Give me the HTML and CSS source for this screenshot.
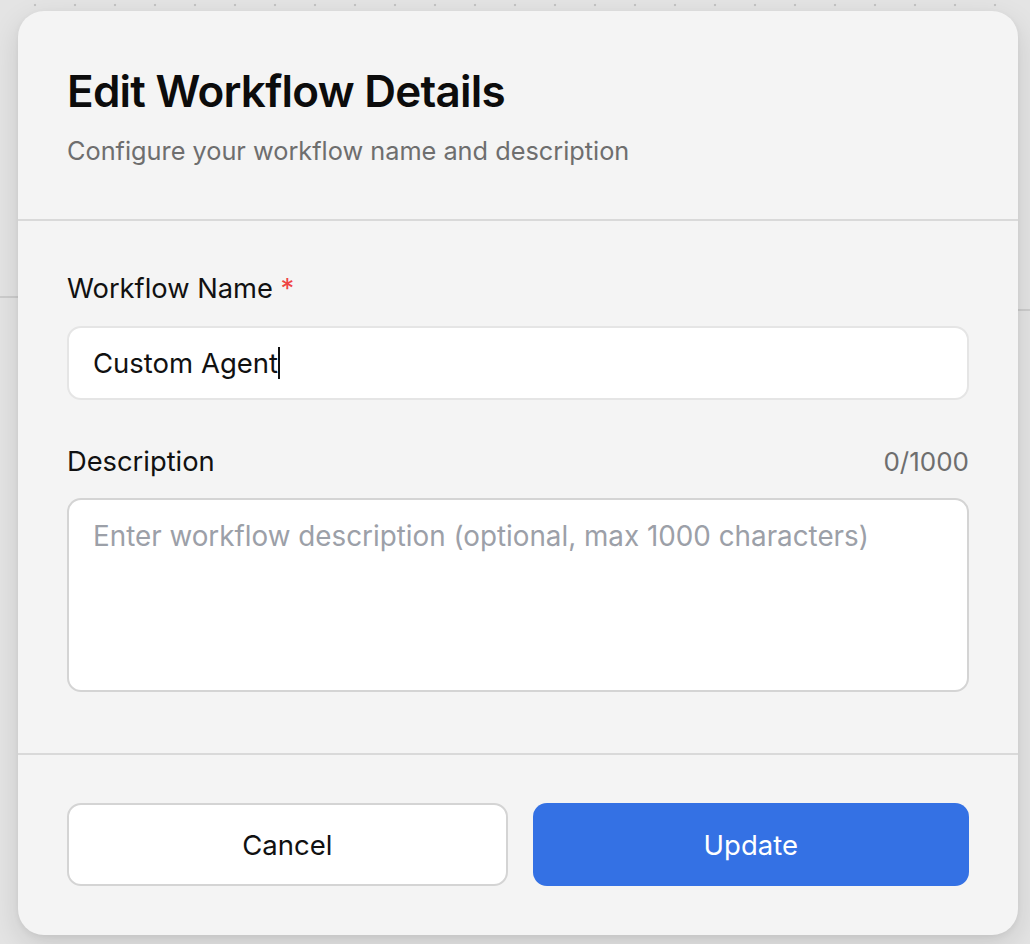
FILE: index.html
```html
<!DOCTYPE html>
<html lang="en">
<head>
    <meta charset="UTF-8">
    <meta name="viewport" content="width=device-width, initial-scale=1.0">
    <title>Edit Workflow Details</title>
    <link rel="stylesheet" href="styles.css">
</head>
<body>
    <!-- canvas lines peeking out behind the dialog -->
    <div class="backdrop-line backdrop-line-left"></div>
    <div class="backdrop-line backdrop-line-right"></div>

    <div class="dialog">
        <div class="dialog-header">
            <h1 class="dialog-title">Edit Workflow Details</h1>
            <p class="dialog-subtitle">Configure your workflow name and description</p>
        </div>

        <div class="dialog-body">
            <div class="field">
                <label class="field-label">Workflow Name <span class="required">*</span></label>
                <div class="text-input" role="textbox">Custom Agent<span class="caret"></span></div>
            </div>

            <div class="field field-description">
                <div class="field-row">
                    <label class="field-label" for="description">Description</label>
                    <span class="char-count">0/1000</span>
                </div>
                <textarea id="description" class="text-area" placeholder="Enter workflow description (optional, max 1000 characters)"></textarea>
            </div>
        </div>

        <div class="dialog-footer">
            <button class="btn btn-cancel">Cancel</button>
            <button class="btn btn-primary">Update</button>
        </div>
    </div>
</body>
</html>
```

FILE: styles.css
```css
* {
    margin: 0;
    padding: 0;
    box-sizing: border-box;
}

body {
    font-family: 'Inter', 'Noto Sans', sans-serif;
    background-color: #e4e4e4;
    background-image: radial-gradient(circle at center, #c4c4c4 1.2px, transparent 1.6px);
    background-size: 40px 40px;
    background-position: 15px -15px;
    color: #111;
    height: 944px;
    overflow: hidden;
    padding: 11px 12px 0 18px;
}

.backdrop-line {
    position: absolute;
    height: 2px;
    background: #cdcdcd;
}

.backdrop-line-left {
    left: 0;
    top: 296px;
    width: 20px;
}

.backdrop-line-right {
    right: 0;
    top: 309px;
    width: 14px;
}

.dialog {
    position: relative;
    width: 1000px;
    height: 924px;
    background: #f4f4f4;
    border-radius: 26px;
    box-shadow: 0 10px 30px rgba(0, 0, 0, 0.12), 0 2px 6px rgba(0, 0, 0, 0.05);
    display: flex;
    flex-direction: column;
    overflow: hidden;
}

.dialog-header {
    padding: 54px 49px 54px;
    border-bottom: 2px solid #d9d9d9;
}

.dialog-title {
    font-size: 44px;
    line-height: 53px;
    font-weight: 600;
    letter-spacing: -0.75px;
    color: #0c0c0c;
}

.dialog-subtitle {
    margin-top: 19px;
    font-size: 25.3px;
    line-height: 28px;
    color: #6e6e6e;
}

.dialog-body {
    padding: 53px 49px 0;
    height: 534px;
    border-bottom: 2px solid #d9d9d9;
}

.field-label {
    display: block;
    font-size: 27.3px;
    line-height: 30px;
    color: #111;
}

.required {
    color: #ef4444;
}

.text-input {
    margin-top: 22px;
    height: 74px;
    background: #fff;
    border: 2px solid #e5e5e5;
    border-radius: 14px;
    padding: 0 24px;
    display: flex;
    align-items: center;
    font-size: 27.5px;
    color: #111;
}

.caret {
    display: inline-block;
    width: 2px;
    height: 32px;
    background: #111;
}

.field-description {
    margin-top: 47px;
}

.field-row {
    display: flex;
    justify-content: space-between;
    align-items: baseline;
}

.char-count {
    font-size: 26px;
    line-height: 30px;
    color: #6e6e6e;
}

.text-area {
    display: block;
    width: 100%;
    height: 194px;
    margin-top: 21px;
    background: #fff;
    border: 2px solid #d4d4d4;
    border-radius: 14px;
    padding: 19px 24px;
    font-family: 'Inter', 'Noto Sans', sans-serif;
    font-size: 27.8px;
    line-height: 34px;
    color: #111;
    resize: none;
    outline: none;
}

.text-area::placeholder {
    color: #9ca0a8;
}

.dialog-footer {
    flex: 1;
    display: flex;
    gap: 25px;
    padding: 48px 49px 0;
}

.btn {
    flex: 1;
    height: 83px;
    border-radius: 14px;
    font-family: 'Inter', 'Noto Sans', sans-serif;
    font-size: 27.5px;
    cursor: pointer;
}

.btn-cancel {
    background: #fff;
    border: 2px solid #d4d4d4;
    color: #111;
}

.btn-primary {
    background: #3471e4;
    border: none;
    color: #fff;
}
```
